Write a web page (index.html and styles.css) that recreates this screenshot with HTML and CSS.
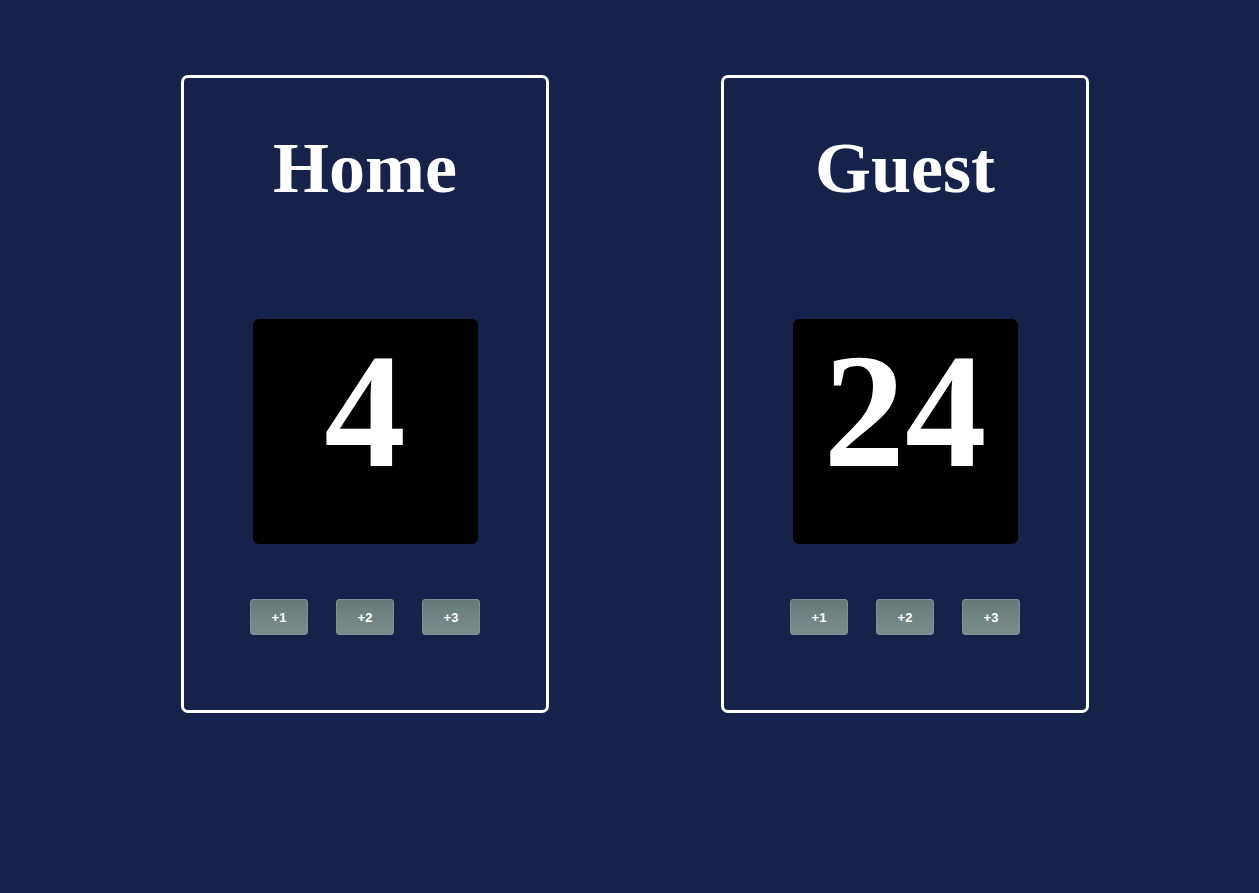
FILE: index.html
```html
<!DOCTYPE html>
<html>
<head>
<meta charset="utf-8">
<link rel="stylesheet" href="styles.css">
</head>
<body>
<main class="board">
  <section class="team">
    <h1 class="team-name">Home</h1>
    <div class="score">4</div>
    <div class="actions">
      <button class="btn">+1</button>
      <button class="btn">+2</button>
      <button class="btn">+3</button>
    </div>
  </section>
  <section class="team">
    <h1 class="team-name">Guest</h1>
    <div class="score">24</div>
    <div class="actions">
      <button class="btn">+1</button>
      <button class="btn">+2</button>
      <button class="btn">+3</button>
    </div>
  </section>
</main>
</body>
</html>
```

FILE: styles.css
```css
html, body {
  margin: 0;
  padding: 0;
  background: #17224a;
  height: 100%;
}

.board {
  display: flex;
  gap: 172px;
  padding: 75px 0 0 181px;
  font-family: "Liberation Serif", "Times New Roman", serif;
}

.team {
  box-sizing: border-box;
  width: 368px;
  height: 638px;
  border: 3px solid #ffffff;
  border-radius: 7px;
  display: flex;
  flex-direction: column;
  align-items: center;
}

.team-name {
  margin: 54px 0 0;
  font-size: 72px;
  line-height: 72px;
  font-weight: bold;
  color: #ffffff;
}

.score {
  box-sizing: border-box;
  margin-top: 115px;
  width: 225px;
  height: 225px;
  padding-top: 10px;
  background: #000000;
  border-radius: 6px;
  color: #ffffff;
  font-size: 163px;
  line-height: 165px;
  font-weight: bold;
  text-align: center;
}

.actions {
  margin-top: 55px;
  display: flex;
  gap: 28px;
}

.btn {
  box-sizing: border-box;
  width: 58px;
  height: 36px;
  padding: 0;
  border: 1px solid #7e9290;
  border-radius: 3px;
  background: linear-gradient(#68797a, #7b8d8b);
  color: #ffffff;
  font-family: "Liberation Sans", Arial, sans-serif;
  font-size: 13px;
  font-weight: bold;
}
```
